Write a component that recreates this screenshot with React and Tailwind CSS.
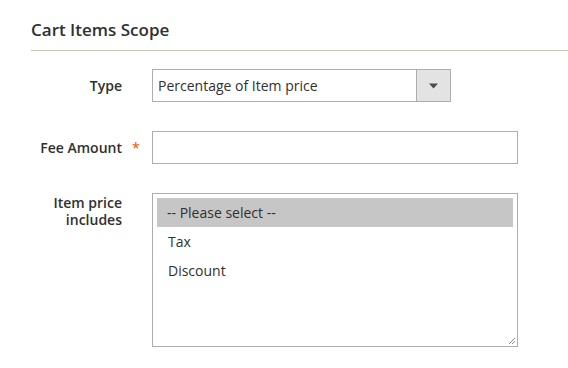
export default function App() {
  const font = { fontFamily: '"Open Sans", "Liberation Sans", sans-serif' };
  return (
    <div className="w-[568px] h-[368px] bg-white text-[#303030] overflow-hidden" style={font}>
      <div className="pl-[31px]">
        <div className="h-[51px] border-b border-[#cac3b4] pt-[18px]">
          <h2 className="text-[17px] font-semibold leading-[23px] text-[#303030]">Cart Items Scope</h2>
        </div>
      </div>
      <div className="flex flex-col pt-[18px] gap-[29px]">
        <div className="flex items-center">
          <div className="w-[122px] text-right text-[14px] font-semibold leading-[19px]">Type</div>
          <div className="ml-[30px] w-[299px] h-[33px] border border-[#adadad] flex">
            <div className="flex-1 flex items-center pl-[5px] text-[14px] leading-[19px]">Percentage of Item price</div>
            <div className="w-[34px] h-full bg-[#e3e3e3] border-l border-[#adadad] flex items-center justify-center">
              <svg width="9" height="6" viewBox="0 0 9 6"><path d="M0 0.5 L9 0.5 L4.5 5.5 Z" fill="#514943" /></svg>
            </div>
          </div>
        </div>
        <div className="flex items-center">
          <div className="w-[122px] text-right text-[14px] font-semibold leading-[19px]">Fee Amount</div>
          <div className="w-[30px] text-[#eb5202] text-[14px] leading-[19px] pl-[10px]">*</div>
          <div className="w-[366px] h-[33px] border border-[#adadad]"></div>
        </div>
        <div className="flex items-start">
          <div className="w-[122px] text-right text-[14px] font-semibold leading-[17px] pt-[1px]">
            Item price<br />includes
          </div>
          <div className="ml-[30px] w-[366px] h-[154px] border border-[#adadad] relative pt-[4px] px-[4px]">
            <div className="h-[29px] bg-[#c6c6c6] pl-[10px] flex items-center text-[14px]">-- Please select --</div>
            <div className="h-[29px] pl-[11px] flex items-center text-[14px]">Tax</div>
            <div className="h-[29px] pl-[11px] flex items-center text-[14px]">Discount</div>
            <svg className="absolute right-[1px] bottom-[1px]" width="8" height="8" viewBox="0 0 8 8">
              <path d="M7 1 L1 7 M7 4 L4 7" stroke="#8a8a8a" strokeWidth="1" />
            </svg>
          </div>
        </div>
      </div>
    </div>
  );
}
